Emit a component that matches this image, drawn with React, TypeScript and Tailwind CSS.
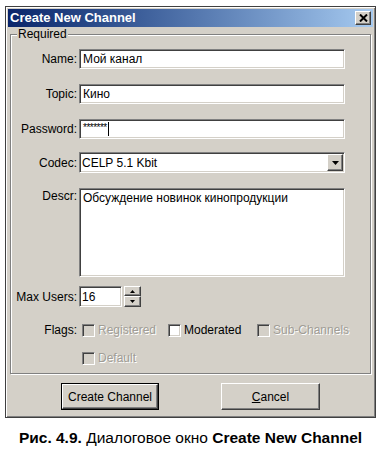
import type { ReactNode } from 'react'

const sunken =
  'border border-t-[#808080] border-l-[#808080] border-b-white border-r-white shadow-[inset_1px_1px_0_#404040,inset_-1px_-1px_0_#d4d0c8]'
const raised =
  'border border-t-white border-l-white border-b-[#404040] border-r-[#404040] shadow-[inset_-1px_-1px_0_#808080]'

function Row({ label, children, className = '', top = false }: { label: string; children: ReactNode; className?: string; top?: boolean }) {
  return (
    <div className={`flex ${top ? 'items-start' : 'items-center'} ${className}`}>
      <div className={`w-[68px] pr-[2px] text-right shrink-0 ${top ? 'pt-[1px]' : ''}`}>{label}</div>
      {children}
    </div>
  )
}

function Check({ label, checked = false, disabled = false }: { label: string; checked?: boolean; disabled?: boolean }) {
  return (
    <div className="flex items-center gap-[3px]">
      <div className={`w-[13px] h-[13px] ${sunken} ${disabled ? 'bg-[#d4d0c8]' : 'bg-white'}`}>
        {checked && <span className="text-[10px]">✓</span>}
      </div>
      <span className={disabled ? 'text-[#a09d96] [text-shadow:1px_1px_0_#fff]' : 'text-black'}>{label}</span>
    </div>
  )
}

function Arrow({ up = false, w = 7 }: { up?: boolean; w?: number }) {
  const h = Math.ceil(w / 2)
  return (
    <svg width={w} height={h} viewBox={`0 0 ${w} ${h}`}>
      <polygon points={up ? `0,${h} ${w},${h} ${w / 2},0` : `0,0 ${w},0 ${w / 2},${h}`} fill="#000" />
    </svg>
  )
}

export default function App() {
  return (
    <div className="w-[381px] h-[455px] bg-white overflow-hidden pt-[6px] pl-[5px] font-['Liberation_Sans',Arial,sans-serif] text-[12px] leading-[14px] text-black">
      <div className="w-[371px] h-[412px] bg-[#d4d0c8] border border-[#404040] shadow-[inset_1px_1px_0_#fff,inset_-1px_-1px_0_#808080] p-[2px] flex flex-col">
        {/* title bar */}
        <div className="h-[18px] shrink-0 bg-linear-to-r from-[#0a246a] to-[#a6caf0] flex items-center justify-between pl-[2px] pr-[2px]">
          <span className="text-white font-bold text-[13px] leading-[16px]">Create New Channel</span>
          <div className={`w-[16px] h-[14px] bg-[#d4d0c8] flex items-center justify-center ${raised}`}>
            <svg width="9" height="8" viewBox="0 0 9 8">
              <path d="M1 0.5 L8 7.5 M8 0.5 L1 7.5" stroke="#000" strokeWidth="2" />
            </svg>
          </div>
        </div>

        {/* Required group */}
        <div className="relative mt-[7px] mx-[2px] h-[340px] border border-[#808080] shadow-[inset_1px_1px_0_#fff,1px_1px_0_#fff] pt-[14px]">
          <span className="absolute left-[6px] -top-[8px] px-[1px] bg-[#d4d0c8]">Required</span>

          <Row label="Name:" className="h-[20px]">
            <div className={`w-[266px] h-[20px] bg-white ${sunken} pl-[3px] flex items-center`}>Мой канал</div>
          </Row>
          <Row label="Topic:" className="h-[20px] mt-[15px]">
            <div className={`w-[266px] h-[20px] bg-white ${sunken} pl-[3px] flex items-center`}>Кино</div>
          </Row>
          <Row label="Password:" className="h-[20px] mt-[15px]">
            <div className={`w-[266px] h-[20px] bg-white ${sunken} pl-[3px] flex items-center`}>
              <span className="text-[10px] leading-[14px] -mt-[3px] tracking-[-0.5px]">*******</span>
              <span className="w-[1px] h-[14px] bg-black ml-[1px]" />
            </div>
          </Row>
          <Row label="Codec:" className="h-[21px] mt-[13px]">
            <div className={`w-[266px] h-[21px] bg-white ${sunken} pl-[2px] flex items-center justify-between`}>
              <span>CELP 5.1 Kbit</span>
              <div className={`w-[16px] h-[17px] bg-[#d4d0c8] mr-[1px] flex items-center justify-center ${raised}`}>
                <Arrow />
              </div>
            </div>
          </Row>
          <Row label="Descr:" top className="h-[89px] mt-[15px]">
            <div className={`w-[266px] h-[89px] bg-white ${sunken} pl-[3px] pt-[2px]`}>Обсуждение новинок кинопродукции</div>
          </Row>
          <Row label="Max Users:" className="h-[21px] mt-[9px]">
            <div className={`w-[43px] h-[21px] bg-white ${sunken} pl-[2px] flex items-center`}>16</div>
            <div className="w-[17px] h-[21px] ml-[2px] flex flex-col">
              <div className={`h-[10px] bg-[#d4d0c8] flex items-center justify-center ${raised}`}>
                <Arrow up w={5} />
              </div>
              <div className={`h-[11px] bg-[#d4d0c8] flex items-center justify-center ${raised}`}>
                <Arrow w={5} />
              </div>
            </div>
          </Row>
          <Row label="Flags:" className="h-[16px] mt-[15px]">
            <div className="flex ml-[3px]">
              <div className="w-[86px]">
                <Check label="Registered" disabled />
              </div>
              <div className="w-[89px]">
                <Check label="Moderated" />
              </div>
              <Check label="Sub-Channels" disabled />
            </div>
          </Row>
          <div className="flex items-center h-[16px] mt-[12px] pl-[71px]">
            <Check label="Default" disabled />
          </div>
        </div>

        {/* buttons */}
        <div className="flex mt-[9px] pl-[53px]">
          <div className="w-[98px] h-[27px] border border-black">
            <div className={`w-full h-full flex items-center justify-center ${raised}`}>Create Channel</div>
          </div>
          <div className={`ml-[62px] w-[99px] h-[27px] flex items-center justify-center ${raised}`}>
            <span>
              <span className="underline">C</span>ancel
            </span>
          </div>
        </div>
      </div>

      <p className="mt-[11px] -ml-[5px] text-center text-[15.5px] leading-[18px]">
        <b>Рис. 4.9.</b> Диалоговое окно <b>Create New Channel</b>
      </p>
    </div>
  )
}
